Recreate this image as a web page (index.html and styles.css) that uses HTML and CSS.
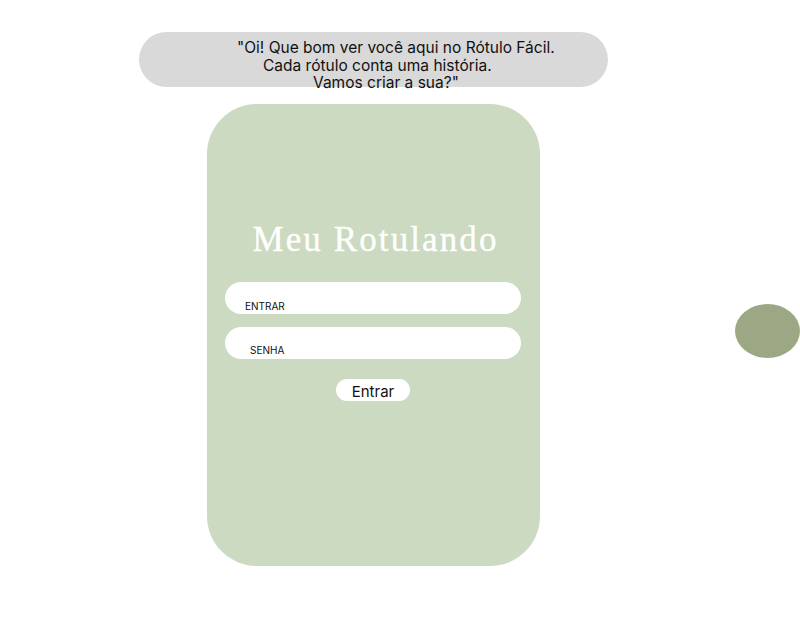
FILE: index.html
```html
<!DOCTYPE html>
<html lang="pt-BR">
<head>
<meta charset="utf-8">
<title>Meu Rotulando</title>
<link rel="stylesheet" href="styles.css">
</head>
<body>
<div class="page">
  <div class="column">
    <div class="bubble">
      <span class="line line1">"Oi! Que bom ver você aqui no Rótulo Fácil.</span>
      <span class="line line2">Cada rótulo conta uma história.</span>
      <span class="line line3">Vamos criar a sua?"</span>
    </div>
    <div class="card">
      <h1 class="title">Meu Rotulando</h1>
      <div class="field field-user">ENTRAR</div>
      <div class="field field-pass">SENHA</div>
      <button class="btn" type="button">Entrar</button>
    </div>
  </div>
  <div class="dot"></div>
</div>
</body>
</html>
```
FILE: styles.css
```css
html, body {
  margin: 0;
  padding: 0;
  background: #ffffff;
}
body {
  font-family: Inter, "Noto Sans", sans-serif;
  color: #000;
}
.page {
  display: flex;
  align-items: flex-start;
}
.column {
  margin-left: 139px;
  width: 469px;
  display: flex;
  flex-direction: column;
  align-items: center;
}
.bubble {
  box-sizing: border-box;
  width: 469px;
  height: 55px;
  margin-top: 32px;
  background: #d9d9d9;
  border-radius: 28px;
  padding-top: 7px;
  font-size: 15.5px;
  line-height: 17.7px;
  color: #111;
  display: flex;
  flex-direction: column;
  align-items: flex-start;
}
.line { display: block; white-space: nowrap; }
.line1 { padding-left: 98px; }
.line2 { padding-left: 124px; }
.line3 { padding-left: 174px; }
.card {
  box-sizing: border-box;
  width: 333px;
  height: 462px;
  margin-top: 17px;
  background: #cbdac0;
  border-radius: 50px;
  padding-top: 116px;
  display: flex;
  flex-direction: column;
  align-items: center;
}
.title {
  margin: 0 0 0 4px;
  font-family: "Liberation Serif", serif;
  font-weight: 400;
  font-size: 35px;
  line-height: 40px;
  letter-spacing: 2.1px;
  color: #ffffff;
  -webkit-text-stroke: 0.35px #ffffff;
}
.field {
  box-sizing: border-box;
  width: 296px;
  height: 32px;
  background: #ffffff;
  border-radius: 16px;
  font-size: 10px;
  line-height: 12px;
  color: #111;
  margin-left: -1px;
}
.field-user {
  margin-top: 22px;
  padding: 18px 0 0 20px;
}
.field-pass {
  margin-top: 13px;
  padding: 17px 0 0 25px;
}
.btn {
  margin-top: 20px;
  width: 74px;
  height: 22px;
  border: 0;
  border-radius: 11px;
  background: #ffffff;
  font-family: Inter, "Noto Sans", sans-serif;
  font-size: 15px;
  line-height: 18px;
  padding: 4px 0 0 0;
  color: #111;
  margin-left: -1px;
}
.dot {
  width: 65px;
  height: 54px;
  margin-left: 127px;
  margin-top: 304px;
  border-radius: 50%;
  background: #9ba883;
  flex-shrink: 0;
}
```
